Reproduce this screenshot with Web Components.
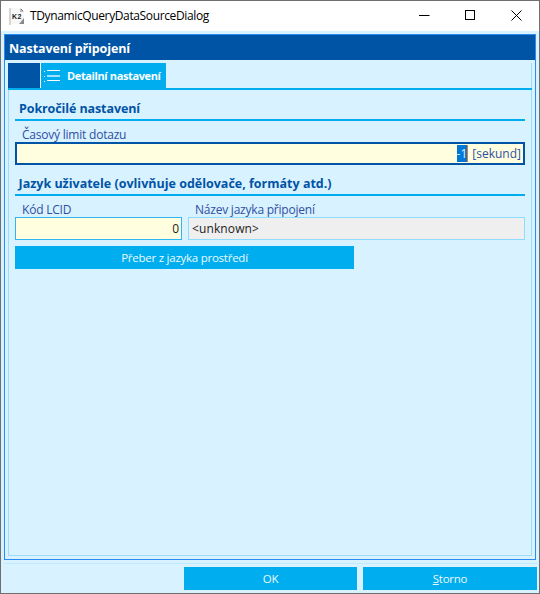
<!DOCTYPE html>
<html lang="cs"><head><meta charset="utf-8"><title>TDynamicQueryDataSourceDialog</title>
<style>
html,body{margin:0;padding:0;background:#d9f2ff}
body{font:12px "Open Sans","Noto Sans",sans-serif}
</style></head><body>
<k2-window>
  <k2-titlebar slot="title">TDynamicQueryDataSourceDialog</k2-titlebar>
  <k2-panel heading="Nastavení připojení">
    <k2-tabs label="Detailní nastavení"></k2-tabs>
    <k2-section heading="Pokročilé nastavení">
      <k2-field label="Časový limit dotazu" kind="focus"><span class="v"><span style="background:#0078d7;color:#dff0ff">-1</span><span style="display:inline-block;width:1px;height:17px;background:#e8791d;vertical-align:-4px"></span></span><span style="color:#2e4fa3;margin-left:4px">[sekund]</span></k2-field>
    </k2-section>
    <k2-section heading="Jazyk uživatele (ovlivňuje odělovače, formáty atd.)" compact>
      <k2-row>
        <k2-field label="Kód LCID" kind="edit" style="width:167px">0</k2-field>
        <k2-field label="Název jazyka připojení" kind="readonly" style="flex:1">&lt;unknown&gt;</k2-field>
      </k2-row>
      <k2-button style="width:339px;margin-top:6px">Přeber z jazyka prostředí</k2-button>
    </k2-section>
  </k2-panel>
  <k2-footer>
    <k2-button style="width:173px">OK</k2-button>
    <k2-button style="width:174px"><u>S</u>torno</k2-button>
  </k2-footer>
</k2-window>
<script>
function def(name, html){
  customElements.define(name, class extends HTMLElement{
    connectedCallback(){
      if(this.shadowRoot) return;
      const a=n=>this.getAttribute(n)||'';
      const r=this.attachShadow({mode:'open'});
      r.innerHTML=html(a);
    }
  });
}
def('k2-window',()=>`<style>
:host{display:flex;flex-direction:column;box-sizing:border-box;width:540px;height:594px;border:1px solid #6f6f6f;background:#d9f2ff;overflow:hidden}
</style><slot name="title"></slot><slot></slot>`);
def('k2-titlebar',()=>`<style>
:host{display:flex;align-items:center;height:30px;background:#fff;color:#000;flex:none;font:12px "Open Sans",sans-serif}
.ic{margin-left:8px;width:17px;height:17px;flex:none;position:relative}
.ic svg{display:block}
.t{margin-left:4px;flex:1;letter-spacing:-.37px;position:relative;top:-1px}
.b{width:46px;height:30px;display:flex;align-items:center;justify-content:center;flex:none;position:relative;top:-1px}
.k{position:absolute;left:3px;top:4px;font:bold 7px/9px "Liberation Sans",sans-serif;color:#222;letter-spacing:.5px}
</style>
<div class="ic"><svg width="17" height="17" viewBox="0 0 17 17"><rect x="0" y="0" width="2" height="17" fill="#d6d6d6"/><path d="M2 0H11L15 4V16H2Z" fill="#f7f7f7"/><path d="M11 0L15 4H11Z" fill="#bdbdbd"/><path d="M10 16L15 10V16Z" fill="#8a8a8a"/><path d="M12 1L14 3" stroke="#777"/></svg><span class="k">K2</span></div>
<div class="t"><slot></slot></div>
<div class="b"><svg width="11" height="11" viewBox="0 0 11 11"><path d="M0 5.5H10.5" stroke="#000" fill="none"/></svg></div>
<div class="b"><svg width="11" height="11" viewBox="0 0 11 11"><rect x=".5" y=".5" width="9" height="9" stroke="#000" fill="none"/></svg></div>
<div class="b"><svg width="11" height="11" viewBox="0 0 11 11"><path d="M.5 .5L10.5 10.5M10.5 .5L.5 10.5" stroke="#000" fill="none" stroke-width="1"/></svg></div>`);
def('k2-panel',a=>`<style>
:host{display:flex;flex-direction:column;flex:none;box-sizing:border-box;height:526px;margin:3px 3px 0 3px;border:1px solid #2a8cf0;background:#d9f2ff}
.h{height:25px;background:#0054a6;color:#fff;font:bold 12.5px/27px "Open Sans",sans-serif;padding-left:4px;flex:none;letter-spacing:-.1px}
.b{flex:1;display:flex;flex-direction:column;margin:3px}
.c{flex:1;display:flex;flex-direction:column;padding:0 6px;border:1px solid #9edcfb;border-top:0;min-height:0}
::slotted(k2-tabs){margin:0 -7px}
</style><div class="h">${a('heading')}</div><div class="b"><div class="c"><slot></slot></div></div>`);
def('k2-tabs',a=>`<style>
:host{display:flex;flex:none;height:27px;box-sizing:border-box;border-bottom:2px solid #00aeef;font:bold 11px "Open Sans",sans-serif}
.d{width:32px;background:#0054a6;border-right:1px solid #fff;flex:none}
.t{width:125px;box-sizing:border-box;background:#00aeef;color:#fff;display:flex;align-items:center;flex:none;padding-left:3px;white-space:nowrap}
svg{display:block;margin-right:7px;flex:none}
span{letter-spacing:-.38px}
</style><div class="d"></div><div class="t"><svg width="16" height="12" viewBox="0 0 16 12"><g fill="#fff"><rect x="0" y="1" width="1" height="1"/><rect x="3" y="0" width="13" height="1"/><rect x="0" y="6" width="1" height="1"/><rect x="0" y="11" width="1" height="1"/><rect x="3" y="10" width="13" height="1"/></g><rect x="3" y="5" width="13" height="2" fill="#9fe3ff"/></svg><span>${a('label')}</span></div>`);
def('k2-section',a=>`<style>
:host{display:block;flex:none}
h2{margin:0;height:31px;box-sizing:border-box;padding:0 0 0 4px;border-bottom:2px solid #00aeef;color:#0054a6;font:bold 12.5px/37px "Open Sans",sans-serif;letter-spacing:-.1px;white-space:nowrap}
:host([compact]) h2{padding-left:3.5px;line-height:38px;letter-spacing:0}
</style><h2>${a('heading')}</h2><slot></slot>`);
def('k2-row',()=>`<style>:host{display:flex;gap:6px}</style><slot></slot>`);
def('k2-field',a=>{
 const k=a('kind');
 const b=k==='focus'?'border:2px solid #0054a6;background:#ffffdf':k==='edit'?'border:1px solid #2fb5f2;background:#ffffdf':'border:1px solid #8fdcff;background:#efefef';
 const j=k==='readonly'?'justify-content:flex-start;padding-left:3px':'justify-content:flex-end;padding-right:2px';
 return `<style>
:host{display:block;font:12px "Open Sans",sans-serif}
label{display:block;height:21px;box-sizing:border-box;padding-left:7px;color:#2e4f9f;line-height:27px;white-space:nowrap;letter-spacing:-.22px}
.i{box-sizing:border-box;height:23px;${b};display:flex;align-items:center;${j};color:#222;white-space:nowrap;${k==='readonly'?'letter-spacing:.12px':''}}
</style><label>${a('label')}</label><div class="i"><slot></slot></div>`});
def('k2-button',()=>`<style>
:host{display:flex;align-items:center;justify-content:center;height:23px;background:#00aeef;color:#eaf9ff;font:11.5px "Open Sans",sans-serif;box-sizing:border-box;flex:none;letter-spacing:-.25px}
</style><slot></slot>`);
def('k2-footer',()=>`<style>
:host{display:flex;justify-content:flex-end;gap:6px;flex:none;margin:3px 1px 0 3px;padding:3px 1px 0 0;border-top:1px solid #bfeaff;height:28px;box-sizing:border-box}
</style><slot></slot>`);
</script>
</body></html>
